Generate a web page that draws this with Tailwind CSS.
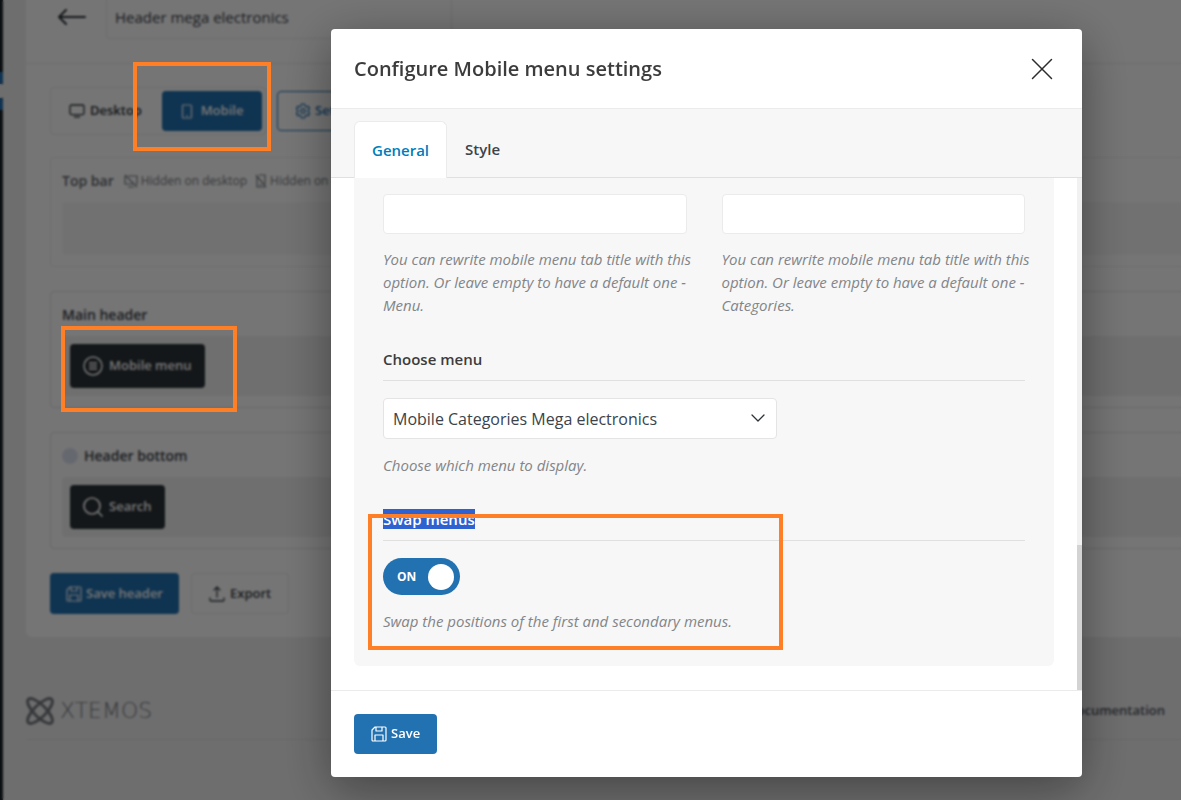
<!DOCTYPE html>
<html lang="en">
<head>
    <meta charset="UTF-8">
    <meta name="viewport" content="width=device-width, initial-scale=1.0">
    <title>Header builder</title>
    <!-- Tailwind CSS -->
    <script src="https://cdn.jsdelivr.net/npm/@tailwindcss/browser@4"></script>
</head>
<body class="relative h-screen overflow-hidden bg-[#f0f0f1] font-['Open_Sans','Noto_Sans',sans-serif] text-[#3c434a]">

<!-- Header builder page -->
<div class="flex h-full overflow-hidden">

    <!-- Admin menu edge -->
    <aside class="flex w-[3px] shrink-0 flex-col bg-[#1d2327]">
        <div class="mt-[72px] h-3 rounded-br-full bg-[#2271b1]"></div>
        <div class="h-[14px] bg-[#f0f0f1]"></div>
        <div class="h-3 rounded-tr-full bg-[#2271b1]"></div>
    </aside>

    <div class="grow pl-[23px]">
        <!-- The builder is wider than the window and runs off its right edge -->
        <main class="-mr-16 rounded-bl-md bg-white">
            <div class="flex h-16 items-start gap-5 border-b border-[#ebebeb] pl-8">
                <a href="#" aria-label="Back" class="mt-[9px]">
                    <svg class="h-4 w-7" viewBox="0 0 28 16" fill="none" stroke="#2c3338" stroke-width="2" stroke-linecap="round" stroke-linejoin="round"><path d="M8 1 1 8l7 7M1 8h26"/></svg>
                </a>
                <input type="text" aria-label="Header name" value="Header mega electronics" class="h-[39px] w-[346px] rounded-b border border-t-0 border-[#ebebeb] px-2 pb-1 text-[15px] text-[#3c434a]">
            </div>

            <div class="px-6 py-[23px]">
                <div class="flex items-center gap-[11px] text-[13px] font-semibold">
                    <div class="flex rounded border border-[#ebebeb] p-[3px]">
                        <button class="flex h-10 w-[108px] items-center gap-[5px] pl-[15px] text-[#2c3338]">
                            <svg class="h-[14px] w-4" viewBox="0 0 16 14" fill="none" stroke="currentColor" stroke-width="1.3"><rect x="1" y="1" width="14" height="9.6" rx="1.5"/><path d="M5 13h6"/></svg>
                            Desktop
                        </button>
                        <button class="flex h-10 w-[100px] items-center justify-center gap-2 rounded bg-[#2271b1] text-white">
                            <svg class="h-[15px] w-3" viewBox="0 0 12 15" fill="none" stroke="currentColor" stroke-width="1.2"><rect x="1.500" y="1" width="9" height="13" rx="1"/><path d="M5 12h2"/></svg>
                            Mobile
                        </button>
                    </div>
                    <button class="flex h-10 items-center gap-[5px] rounded border border-[#2271b1] px-[18px] text-[#2271b1]">
                        <svg class="h-4 w-[14px]" viewBox="0 0 14 16" fill="none" stroke="currentColor" stroke-width="1.2" stroke-linejoin="round"><path d="M5.500 1h3l.6 2 1.400.8 2-.5L13.500 6l-1.300 1.200v1.600L13.500 10l-1 2.700-2-.5-1.400.8-.6 2h-3l-.6-2-1.400-.8-2 .5L.5 10l1.300-1.200V7.200L.5 6l1-2.700 2 .5L4.900 3z"/><circle cx="7" cy="8" r="2.200"/></svg>
                        Settings
                    </button>
                </div>

                <section class="mt-[22px] rounded border border-[#f0f0f0] p-[11px]">
                    <h2 class="mb-[9px] flex h-6 items-center text-sm font-semibold text-[#646970]">
                        Top bar
                        <span class="ml-[10px] flex items-center gap-[3px] text-xs font-normal text-[#787c82]">
                            <svg class="h-[14px] w-[14px]" viewBox="0 0 14 14" fill="none" stroke="currentColor" stroke-width="1.2"><path d="M4 2h9v8h-1M9 10H1V2M4 13h6M1 1l12 12"/></svg>
                            Hidden on desktop
                        </span>
                        <span class="ml-2 flex items-center gap-[3px] text-xs font-normal whitespace-nowrap text-[#787c82]">
                            <svg class="h-[14px] w-3" viewBox="0 0 12 14" fill="none" stroke="currentColor" stroke-width="1.2"><path d="M4 1h6v9M2 3v10h8M4 11h3M1 1l10 12"/></svg>
                            Hidden on mobile
                        </span>
                    </h2>
                    <div class="h-[53px] rounded bg-[#f7f7f7]"></div>
                </section>

                <section class="mt-6 rounded border border-[#e4e4e4] p-[11px]">
                    <h2 class="mb-[9px] flex h-6 items-center text-sm font-semibold">Main header</h2>
                    <div class="rounded bg-[#f2f2f2] p-2">
                        <button class="flex h-11 items-center gap-[6px] rounded bg-[#2c3338] px-[13px] text-[13px] font-semibold text-white">
                            <svg class="h-5 w-5" viewBox="0 0 20 20" fill="none" stroke="currentColor" stroke-width="1.500"><circle cx="10" cy="10" r="9"/><path d="M6 7h8M6 10h8M6 13h8"/></svg>
                            Mobile menu
                        </button>
                    </div>
                </section>

                <section class="mt-6 rounded border border-[#e4e4e4] p-[11px]">
                    <h2 class="mb-[9px] flex h-6 items-center gap-[6px] text-sm font-semibold">
                        <span class="h-4 w-4 rounded-full bg-[#dfe3f5]"></span>
                        Header bottom
                    </h2>
                    <div class="rounded bg-[#f2f2f2] p-2">
                        <button class="flex h-11 items-center gap-[6px] rounded bg-[#2c3338] px-[13px] text-[13px] font-semibold text-white">
                            <svg class="h-5 w-5" viewBox="0 0 20 20" fill="none" stroke="currentColor" stroke-width="1.700" stroke-linecap="round"><circle cx="9" cy="9" r="8"/><path d="m15 15 4 4"/></svg>
                            Search
                        </button>
                    </div>
                </section>

                <div class="mt-6 flex gap-3 text-[13px] font-semibold">
                    <button class="flex h-[41px] items-center gap-1 rounded bg-[#2271b1] px-4 text-white">
                        <svg class="h-4 w-4" viewBox="0 0 16 16" fill="none" stroke="currentColor" stroke-width="1.200" stroke-linejoin="round"><path d="M4 1h10a1 1 0 0 1 1 1v12a1 1 0 0 1-1 1H2a1 1 0 0 1-1-1V4zM5 1v4h6V1M4 15V9h8v6"/></svg>
                        Save header
                    </button>
                    <button class="flex h-[41px] items-center gap-[5px] rounded border border-[#ebebeb] px-[17px]">
                        <svg class="h-4 w-4" viewBox="0 0 16 16" fill="none" stroke="currentColor" stroke-width="1.300" stroke-linecap="round" stroke-linejoin="round"><path d="M8 11V1M5 4l3-3 3 3M1 12v2a1 1 0 0 0 1 1h12a1 1 0 0 0 1-1v-2"/></svg>
                        Export
                    </button>
                </div>
            </div>
        </main>

        <footer class="mt-[60px] flex items-center justify-between border-b border-[#e2e2e2] pr-4 pb-[14px]">
            <a href="#" class="flex items-center gap-[6px] text-[#787c82]">
                <svg class="h-7 w-7" viewBox="0 0 28 28" fill="none" stroke="currentColor" stroke-width="3"><ellipse cx="14" cy="14" rx="16.500" ry="6" transform="rotate(45 14 14)"/><ellipse cx="14" cy="14" rx="16.500" ry="6" transform="rotate(-45 14 14)"/></svg>
                <span class="font-['DejaVu_Sans',sans-serif] text-[22px] leading-none font-extralight">XTEMOS</span>
            </a>
            <a href="#" class="text-[13px] font-semibold text-[#50575e]">Documentation</a>
        </footer>
    </div>
</div>

<!-- Settings popup -->
<div class="absolute inset-0 flex justify-end bg-black/54 pt-[29px] pr-[99px] pb-[23px] pl-4 backdrop-blur-[1px]">
    <div role="dialog" aria-labelledby="popup-title" class="flex w-full max-w-[751px] flex-col overflow-hidden rounded bg-white shadow-[0_12px_50px_rgba(0,0,0,0.4)]">

        <header class="flex h-20 shrink-0 items-center justify-between border-b border-[#ebebeb] pr-[29px] pl-[23px]">
            <h2 id="popup-title" class="text-xl font-semibold text-[#3c3c3c]">Configure Mobile menu settings</h2>
            <button aria-label="Close">
                <svg class="h-[22px] w-[22px]" viewBox="0 0 22 22" fill="none" stroke="#2c2c2c" stroke-width="1.500" stroke-linecap="round"><path d="m1.500 1.500 19 19M20.500 1.500l-19 19"/></svg>
            </button>
        </header>

        <nav class="flex shrink-0 border-b border-[#e0e0e0] bg-[#f7f7f7] pt-3 pl-[23px] text-[15px] font-semibold">
            <button class="-mb-px h-[57px] rounded-t-md border border-b-0 border-[#ebebeb] bg-white px-[17px] text-[#007cba]">General</button>
            <button class="h-14 px-[18px]">Style</button>
        </nav>

        <div class="flex min-h-0 grow">
            <div class="grow overflow-hidden px-[23px]">
                <div class="rounded-b-md bg-[#f7f7f7] px-[29px] pt-4 pb-[33px]">
                    <div class="grid grid-cols-2 gap-[35px]">
                        <div>
                            <input type="text" aria-label="First tab title" class="h-10 w-full rounded border border-[#ebebeb] bg-white px-2">
                            <p class="mt-[14px] -mr-2 text-[15px] leading-[23px] text-[#828589] italic">You can rewrite mobile menu tab title with this option. Or leave empty to have a default one - Menu.</p>
                        </div>
                        <div>
                            <input type="text" aria-label="Second tab title" class="h-10 w-full rounded border border-[#ebebeb] bg-white px-2">
                            <p class="mt-[14px] -mr-2 text-[15px] leading-[23px] text-[#828589] italic">You can rewrite mobile menu tab title with this option. Or leave empty to have a default one - Categories.</p>
                        </div>
                    </div>

                    <div class="mt-[29px]">
                        <label for="menu" class="block border-b border-[#e0e0e0] pb-2 text-[15px] leading-[26px] font-semibold text-[#3c3c3c]">Choose menu</label>
                        <div class="relative mt-[17px] w-[394px] max-w-full">
                            <select id="menu" class="h-[41px] w-full appearance-none rounded border border-[#e4e4e4] bg-white px-[9px] text-base">
                                <option>Mobile Categories Mega electronics</option>
                            </select>
                            <svg class="pointer-events-none absolute top-4 right-3 h-[9px] w-[14px]" viewBox="0 0 14 9" fill="none" stroke="#2c3338" stroke-width="1.300" stroke-linecap="round" stroke-linejoin="round"><path d="m1 1 6 6 6-6"/></svg>
                        </div>
                        <p class="mt-[15px] text-[15px] leading-[23px] text-[#828589] italic">Choose which menu to display.</p>
                    </div>

                    <div class="mt-[29px]">
                        <h3 class="border-b border-[#e0e0e0] pb-2 text-[15px] leading-[26px] font-semibold"><span class="bg-[#2f62d0] text-white">Swap menus</span></h3>
                        <label class="mt-[17px] flex h-[37px] w-[77px] cursor-pointer items-center justify-between rounded-full bg-[#2271b1] pr-[6px] pl-[14px] text-xs font-bold text-white">
                            <input type="checkbox" checked class="sr-only">
                            ON
                            <span class="h-[26px] w-[26px] rounded-full bg-white"></span>
                        </label>
                        <p class="mt-[15px] text-[15px] leading-[23px] text-[#828589] italic">Swap the positions of the first and secondary menus.</p>
                    </div>
                </div>
            </div>
            <!-- Scrollbar -->
            <div class="flex w-[5px] shrink-0 flex-col justify-end bg-[#f1f1f1]">
                <div class="h-[145px] bg-[#d3d3d3]"></div>
            </div>
        </div>

        <footer class="shrink-0 border-t border-[#ebebeb] p-[23px]">
            <button class="flex h-10 items-center gap-1 rounded bg-[#2271b1] px-[17px] text-[13px] font-semibold text-white">
                <svg class="h-4 w-4" viewBox="0 0 16 16" fill="none" stroke="currentColor" stroke-width="1.200" stroke-linejoin="round"><path d="M4 1h10a1 1 0 0 1 1 1v12a1 1 0 0 1-1 1H2a1 1 0 0 1-1-1V4zM5 1v4h6V1M4 15V9h8v6"/></svg>
                Save
            </button>
        </footer>
    </div>
</div>

<!-- Highlight frames -->
<div class="pointer-events-none absolute top-[62px] left-[133px] h-[89px] w-[138px] border-4 border-[#ff7f27]"></div>
<div class="pointer-events-none absolute top-[326px] left-[61px] h-[86px] w-[176px] border-4 border-[#ff7f27]"></div>
<div class="pointer-events-none absolute top-[514px] left-[368px] h-[136px] w-[415px] border-4 border-[#ff7f27]"></div>

</body>
</html>
